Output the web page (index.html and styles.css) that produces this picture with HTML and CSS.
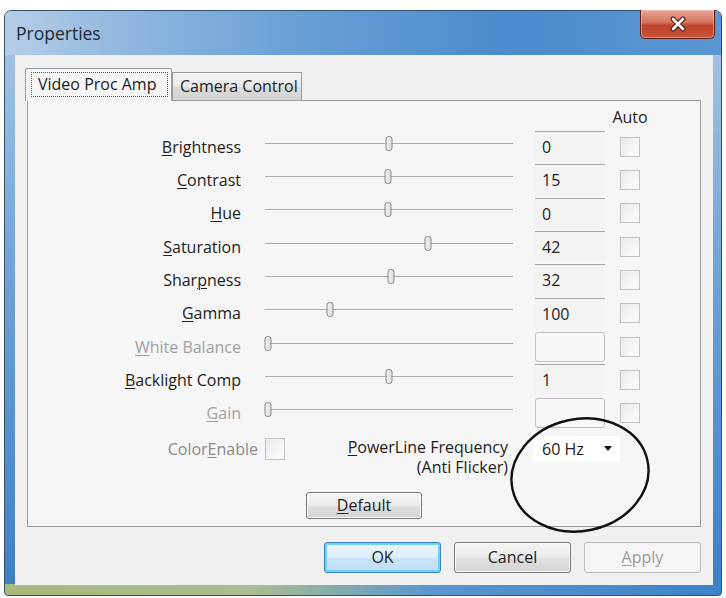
FILE: index.html
```html
<!DOCTYPE html>
<html lang="en">
<head>
    <meta charset="UTF-8">
    <meta name="viewport" content="width=device-width, initial-scale=1.0">
    <title>Properties</title>
    <link rel="stylesheet" href="styles.css">
</head>
<body>
    <div class="window">
        <div class="titlebar">
            <span class="title">Properties</span>
            <button class="close" aria-label="Close">
                <svg width="22" height="16" viewBox="0 0 22 16">
                    <path d="M6 3 L16 13 M16 3 L6 13" stroke="#5b1d14" stroke-width="5" stroke-linecap="round"/>
                    <path d="M6 3 L16 13 M16 3 L6 13" stroke="#fff" stroke-width="2.6" stroke-linecap="round"/>
                </svg>
            </button>
        </div>

        <div class="client">
            <div class="tabs">
                <div class="tab active"><span class="focus">Video Proc Amp</span></div>
                <div class="tab">Camera Control</div>
            </div>

            <div class="panel">
                <div class="grid">
                    <span></span><span></span><span></span><span class="auto">Auto</span>

                    <span class="lbl"><u>B</u>rightness</span>
                    <div class="slider"><div class="track"><i class="thumb" style="left: 50%"></i></div></div>
                    <div class="value">0</div>
                    <div class="check"></div>

                    <span class="lbl"><u>C</u>ontrast</span>
                    <div class="slider"><div class="track"><i class="thumb" style="left: 49.6%"></i></div></div>
                    <div class="value">15</div>
                    <div class="check"></div>

                    <span class="lbl"><u>H</u>ue</span>
                    <div class="slider"><div class="track"><i class="thumb" style="left: 49.6%"></i></div></div>
                    <div class="value">0</div>
                    <div class="check"></div>

                    <span class="lbl"><u>S</u>aturation</span>
                    <div class="slider"><div class="track"><i class="thumb" style="left: 65.7%"></i></div></div>
                    <div class="value">42</div>
                    <div class="check"></div>

                    <span class="lbl">Shar<u>p</u>ness</span>
                    <div class="slider"><div class="track"><i class="thumb" style="left: 50.8%"></i></div></div>
                    <div class="value">32</div>
                    <div class="check"></div>

                    <span class="lbl"><u>G</u>amma</span>
                    <div class="slider"><div class="track"><i class="thumb" style="left: 26.2%"></i></div></div>
                    <div class="value">100</div>
                    <div class="check"></div>

                    <span class="lbl off"><u>W</u>hite Balance</span>
                    <div class="slider"><div class="track"><i class="thumb" style="left: 1.4%"></i></div></div>
                    <div class="value off"></div>
                    <div class="check"></div>

                    <span class="lbl"><u>B</u>acklight Comp</span>
                    <div class="slider"><div class="track"><i class="thumb" style="left: 50%"></i></div></div>
                    <div class="value">1</div>
                    <div class="check"></div>

                    <span class="lbl off"><u>G</u>ain</span>
                    <div class="slider"><div class="track"><i class="thumb" style="left: 1.4%"></i></div></div>
                    <div class="value off"></div>
                    <div class="check"></div>
                </div>

                <div class="extra">
                    <div class="color-enable">
                        <span>Color<u>E</u>nable</span>
                        <div class="check"></div>
                    </div>
                    <div class="powerline">
                        <u>P</u>owerLine Frequency<br>
                        (Anti Flicker)
                    </div>
                    <div class="combo">
                        <span>60 Hz</span>
                        <i class="arrow"></i>
                    </div>
                </div>

                <div class="default-row">
                    <button class="btn small"><u>D</u>efault</button>
                </div>
            </div>

            <div class="buttons">
                <button class="btn focused">OK</button>
                <button class="btn">Cancel</button>
                <button class="btn disabled"><u>A</u>pply</button>
            </div>
        </div>

        <svg class="circle" width="160" height="130" viewBox="0 0 160 130">
            <ellipse cx="80" cy="65" rx="69" ry="56" transform="rotate(-12 80 65)" fill="none" stroke="#111" stroke-width="2.4"/>
        </svg>
    </div>
</body>
</html>
```

FILE: styles.css
```css
*{
    margin: 0;
    padding: 0;
    box-sizing: border-box;
}

body{
    background: #fff;
    font-family: "Open Sans", "Noto Sans", sans-serif;
    font-size: 16px;
    color: #222;
}

u{
    text-decoration-thickness: 1px;
    text-underline-offset: 2px;
}

.window{
    position: relative;
    width: 718px;
    height: 586px;
    margin: 10px 0 0 4px;
    padding: 0 8px 10px 10px;
    display: flex;
    flex-direction: column;
    border: 1px solid #33506e;
    border-radius: 7px 7px 4px 4px;
    background:
        linear-gradient(90deg, #a9b97c 0%, #a7bd92 35%, #5b96cf 60%, #3f82c9 100%) bottom / 100% 11px no-repeat,
        linear-gradient(180deg, #a9c8e6 0%, #6fa3d6 45%, #3d7fc4 100%);
}

.titlebar{
    height: 44px;
    margin: 0 -8px 0 -10px;
    padding: 0 6px 0 11px;
    display: flex;
    justify-content: space-between;
    align-items: flex-start;
    border-radius: 6px 6px 0 0;
    background: linear-gradient(90deg, #b5cee6 0%, #94b9df 15%, #6aa0d6 40%, #4b8bcd 70%, #5a97d3 100%);
}
.title{
    align-self: center;
    font-size: 17.5px;
    color: #1b2a3a;
}
.close{
    width: 75px;
    height: 29px;
    margin-top: -1px;
    border: 1px solid #5e2116;
    border-top: none;
    border-radius: 0 0 5px 5px;
    background: linear-gradient(180deg, #e9a795 0%, #d4705b 45%, #c1412a 55%, #c8533b 100%);
    box-shadow: inset 0 0 0 1px rgba(255, 200, 190, 0.5);
    display: flex;
    justify-content: center;
    align-items: center;
}

.client{
    flex: 1;
    padding: 13px 12px 12px 12px;
    display: flex;
    flex-direction: column;
    background: #f0f0f0;
}

.tabs{
    position: relative;
    z-index: 1;
    height: 32px;
    margin-left: -2px;
    display: flex;
    align-items: flex-end;
}
.tab{
    width: 130px;
    height: 28px;
    padding-left: 7px;
    border: 1px solid #9a9ca2;
    border-bottom: none;
    background: linear-gradient(180deg, #f4f4f4 0%, #e8e8e8 50%, #dcdcdc 51%, #d2d2d2 100%);
    line-height: 26px;
    white-space: nowrap;
}
.tab.active{
    width: 147px;
    height: 33px;
    margin-bottom: -1px;
    padding: 3px 3px 3px 5px;
    border-radius: 2px 2px 0 0;
    background: #f6f6f6;
}
.focus{
    display: block;
    height: 25px;
    padding-left: 6px;
    border: 1px dotted #555;
    line-height: 23px;
}

.panel{
    padding-bottom: 7px;
    border: 1px solid #9a9ca2;
    background: #f6f6f6;
}

.grid{
    display: grid;
    grid-template-columns: 237px 270px 85px 20px;
    grid-template-rows: 29px;
    grid-auto-rows: 33.33px;
    align-items: center;
}
.auto{
    justify-self: center;
    padding-top: 2px;
}
.lbl{
    padding-right: 24px;
    text-align: right;
    white-space: nowrap;
}
.off{
    color: #a2a2a2;
}

.slider{
    height: 100%;
    position: relative;
}
.track{
    position: absolute;
    left: 0;
    top: calc(50% - 4px);
    width: 248px;
    height: 2px;
    background: #ababab;
    border-bottom: 1px solid #fafafa;
}
.thumb{
    position: absolute;
    top: -7px;
    width: 7px;
    height: 15px;
    transform: translateX(-50%);
    border: 1px solid #858585;
    border-radius: 3px;
    background: linear-gradient(90deg, #f2f2f2, #dcdcdc);
}

.value{
    width: 70px;
    height: 31px;
    padding-left: 7px;
    display: flex;
    align-items: center;
    border-top: 1px solid #a8a8a8;
    background: #f3f3f3;
}
.value.off{
    height: 30px;
    border: 1px solid #bdbdbd;
    border-radius: 3px;
    background: #f8f8f8;
}
.check{
    width: 20px;
    height: 20px;
    border: 1px solid #c2c2c2;
    background: linear-gradient(135deg, #ebebeb, #fcfcfc);
}

.extra{
    margin-top: 6px;
    display: flex;
    align-items: flex-start;
}
.color-enable{
    width: 257px;
    height: 26px;
    display: flex;
    justify-content: flex-end;
    align-items: center;
    gap: 7px;
    color: #8a8a8a;
}
.color-enable .check{
    height: 22px;
}
.powerline{
    width: 223px;
    margin-top: 1px;
    text-align: right;
    line-height: 20px;
    white-space: nowrap;
}
.combo{
    width: 87px;
    height: 26px;
    margin-left: 25px;
    padding: 0 8px 0 9px;
    display: flex;
    justify-content: space-between;
    align-items: center;
    background: #fff;
}
.arrow{
    border-left: 4px solid transparent;
    border-right: 4px solid transparent;
    border-top: 5px solid #111;
}

.default-row{
    margin-top: 15px;
    display: flex;
    justify-content: center;
}

.btn{
    width: 117px;
    height: 31px;
    font-family: inherit;
    font-size: 16px;
    color: #222;
    border: 1px solid #7a7a7a;
    border-radius: 3px;
    background: linear-gradient(180deg, #f4f4f4 0%, #ececec 50%, #e0e0e0 51%, #d4d4d4 100%);
    box-shadow: inset 0 0 0 1px #fbfbfb;
}
.btn.small{
    width: 116px;
    height: 27px;
}
.btn.focused{
    border-color: #3a86b8;
    background: linear-gradient(180deg, #ecf6fd 0%, #dcedfb 50%, #c9e4f8 51%, #bedcf4 100%);
    box-shadow: inset 0 0 0 2px #6fd0f3;
}
.btn.disabled{
    color: #9c9c9c;
    border-color: #bcbcbc;
    background: #f5f5f5;
    box-shadow: none;
}

.buttons{
    margin-top: 15px;
    display: flex;
    justify-content: flex-end;
    gap: 13px;
}

.circle{
    position: absolute;
    left: 495px;
    top: 399px;
}
```
